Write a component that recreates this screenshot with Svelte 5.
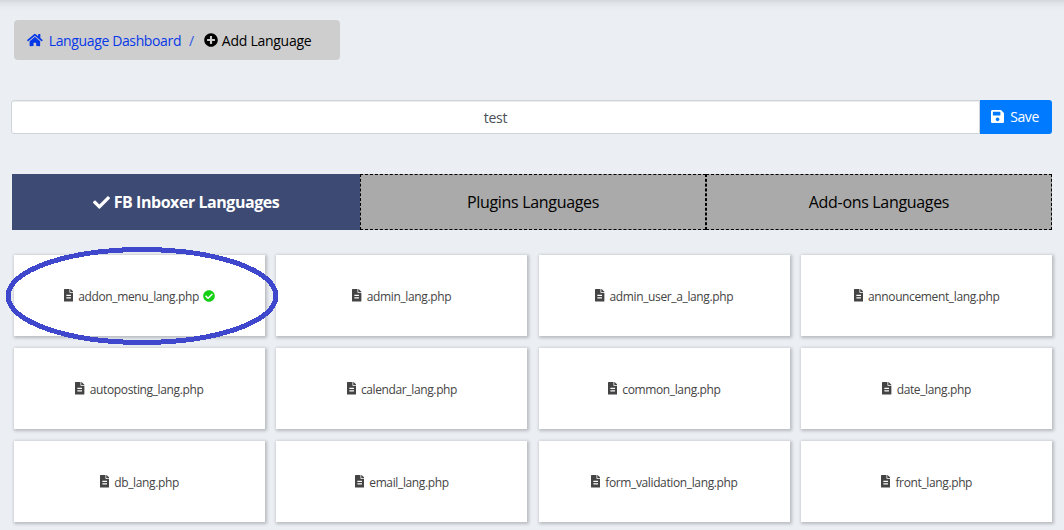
<script>
  const icons = {
    home: { w: 576, d: 'M280.37 148.26L96 300.11V464a16 16 0 0 0 16 16l112.06-.29a16 16 0 0 0 15.92-16V368a16 16 0 0 1 16-16h64a16 16 0 0 1 16 16v95.64a16 16 0 0 0 16 16.05L464 480a16 16 0 0 0 16-16V300L295.67 148.26a12.19 12.19 0 0 0-15.3 0zM571.6 251.47L488 182.56V44.05a12 12 0 0 0-12-12h-56a12 12 0 0 0-12 12v72.61L318.47 43a48 48 0 0 0-61 0L4.34 251.47a12 12 0 0 0-1.6 16.9l25.5 31A12 12 0 0 0 45.15 301l235.22-193.74a12.19 12.19 0 0 1 15.3 0L530.9 301a12 12 0 0 0 16.9-1.6l25.5-31a12 12 0 0 0-1.7-16.93z' },
    plus: { w: 512, d: 'M256 8C119 8 8 119 8 256s111 248 248 248 248-111 248-248S393 8 256 8zm144 276c0 6.6-5.4 12-12 12h-92v92c0 6.6-5.4 12-12 12h-56c-6.6 0-12-5.4-12-12v-92h-92c-6.6 0-12-5.4-12-12v-56c0-6.6 5.4-12 12-12h92v-92c0-6.6 5.4-12 12-12h56c6.6 0 12 5.4 12 12v92h92c6.6 0 12 5.4 12 12v56z' },
    save: { w: 448, d: 'M433.941 129.941l-83.882-83.882A48 48 0 0 0 316.118 32H48C21.49 32 0 53.49 0 80v352c0 26.51 21.49 48 48 48h352c26.51 0 48-21.49 48-48V163.882a48 48 0 0 0-14.059-33.941zM224 416c-35.346 0-64-28.654-64-64 0-35.346 28.654-64 64-64s64 28.654 64 64c0 35.346-28.654 64-64 64zm96-304.52V212c0 6.627-5.373 12-12 12H76c-6.627 0-12-5.373-12-12V108c0-6.627 5.373-12 12-12h228.52c3.183 0 6.235 1.264 8.485 3.515l3.48 3.48A11.996 11.996 0 0 1 320 111.48z' },
    check: { w: 512, d: 'M173.898 439.404l-166.4-166.4c-9.997-9.997-9.997-26.206 0-36.204l36.203-36.204c9.997-9.998 26.207-9.998 36.204 0L192 312.69 432.095 72.596c9.997-9.997 26.207-9.997 36.204 0l36.203 36.204c9.997 9.997 9.997 26.206 0 36.204l-294.4 294.401c-9.998 9.997-26.207 9.997-36.204-.001z' },
    done: { w: 512, d: 'M504 256c0 136.967-111.033 248-248 248S8 392.967 8 256 119.033 8 256 8s248 111.033 248 248zM227.314 387.314l184-184c6.248-6.248 6.248-16.379 0-22.627l-22.627-22.627c-6.248-6.249-16.379-6.249-22.628 0L216 308.118l-70.059-70.059c-6.248-6.248-16.379-6.248-22.628 0l-22.627 22.627c-6.248 6.248-6.248 16.379 0 22.627l104 104c6.249 6.249 16.379 6.249 22.628.001z' },
    file: { w: 384, d: 'M224 136V0H24C10.7 0 0 10.7 0 24v464c0 13.3 10.7 24 24 24h336c13.3 0 24-10.7 24-24V160H248c-13.2 0-24-10.8-24-24zm64 236c0 6.6-5.4 12-12 12H108c-6.6 0-12-5.4-12-12v-24c0-6.6 5.4-12 12-12h168c6.6 0 12 5.4 12 12v24zm0-96c0 6.6-5.4 12-12 12H108c-6.6 0-12-5.4-12-12v-24c0-6.6 5.4-12 12-12h168c6.6 0 12 5.4 12 12v24zM384 121.9v6.1H256V0h6.1c6.4 0 12.5 2.5 17 7l97.9 98c4.5 4.5 7 10.6 7 16.9z' },
  };

  const files = [
    'addon_menu', 'admin', 'admin_user_a', 'announcement',
    'autoposting', 'calendar', 'common', 'date',
    'db', 'email', 'form_validation', 'front',
  ];
  let selected = $state('addon_menu');
  let name = $state('test');
</script>

{#snippet icon(key)}
  <svg class="icon {key}" viewBox="0 0 {icons[key].w} 512" aria-hidden="true"><path d={icons[key].d} /></svg>
{/snippet}

<div class="page">
  <nav class="crumbs">
    <a href="#dashboard">{@render icon('home')}<span>Language Dashboard</span></a>
    <span class="slash">/</span>
    <span class="current">{@render icon('plus')}<span>Add Language</span></span>
  </nav>

  <div class="name-row">
    <input bind:value={name} />
    <button class="save-btn">{@render icon('save')}<span>Save</span></button>
  </div>

  <div class="tabs">
    <div class="tab active">{@render icon('check')}<span>FB Inboxer Languages</span></div>
    <div class="tab"><span>Plugins Languages</span></div>
    <div class="tab"><span>Add-ons Languages</span></div>
  </div>

  <div class="files">
    {#each files as f}
      <div class="card">
        {@render icon('file')}<span class="label">{f}_lang.php</span>
        {#if f === selected}
          {@render icon('done')}
          <svg class="ring" viewBox="0 0 274 100"><ellipse cx="137" cy="50" rx="134" ry="46.5" /></svg>
        {/if}
      </div>
    {/each}
  </div>
</div>

<style>
  :global(body) { margin: 0; background: #ebeef3; }
  .page {
    box-sizing: border-box;
    width: 1064px;
    height: 530px;
    overflow: hidden;
    padding: 20px 12px 0;
    background: linear-gradient(#d3d6da, #dfe2e6 3px, #e8ebf0 7px, #ebeef3 11px);
    font-family: 'Open Sans', 'Noto Sans', sans-serif;
    font-size: 14px;
    color: #000;
  }
  .icon { height: 1em; fill: currentColor; flex: none; display: block; }
  .crumbs {
    box-sizing: border-box;
    width: 326px;
    height: 40px;
    margin-left: 2px;
    padding: 0 13px;
    display: flex;
    align-items: center;
    background: #cecece;
    border-radius: 4px;
    letter-spacing: -0.37px;
    white-space: nowrap;
  }
  .crumbs a, .current { display: flex; align-items: center; text-decoration: none; }
  .crumbs a { color: #0638e8; gap: 6px; }
  .crumbs .current { letter-spacing: -0.27px; }
  .slash { color: #2b55e4; margin: 0 10px 0 8px; }
  .current { gap: 4px; }
  .name-row { display: flex; height: 34px; margin: 40px 0 0 -1px; }
  input {
    box-sizing: border-box;
    flex: 1;
    min-width: 0;
    border: 1px solid #ced4da;
    border-radius: 3px 0 0 3px;
    padding: 1px 0 0;
    text-align: center;
    font: inherit;
    letter-spacing: -0.3px;
    color: #495057;
    background: #fff;
    box-shadow: inset 0 1px 1px rgba(0, 0, 0, 0.075);
    outline: none;
  }
  .save-btn {
    width: 72px;
    padding: 0 2px 1px 0;
    border: 0;
    border-radius: 0 3px 3px 0;
    background: #007bff;
    color: #fff;
    font: inherit;
    letter-spacing: -0.4px;
    display: flex;
    align-items: center;
    justify-content: center;
    gap: 6px;
  }
  .save { height: 15px; }
  .tabs { display: grid; grid-template-columns: 348px 346px 346px; height: 56px; margin-top: 40px; }
  .tab {
    display: flex;
    align-items: center;
    justify-content: center;
    gap: 4px;
    font-size: 16px;
    letter-spacing: -0.32px;
    background: #aaa;
    border: 1px dashed #000;
  }
  .tab.active { background: #3d4a73; border-color: #3d4a73; color: #fff; font-weight: 700; letter-spacing: -0.45px; }
  .check { height: 17px; }
  .files {
    display: grid;
    grid-template-columns: repeat(4, 1fr);
    grid-auto-rows: 81px;
    gap: 12px 11.6px;
    margin: 25px 0 0 2px;
  }
  .card {
    position: relative;
    display: flex;
    align-items: center;
    justify-content: center;
    gap: 5px;
    background: #fff;
    box-shadow: 1px 1px 3px 1px rgba(0, 0, 0, 0.22);
    font-size: 12px;
    letter-spacing: -0.37px;
    color: #444;
  }
  .label { padding-top: 1px; }
  .file { height: 12.5px; }
  .done { color: #15cf15; margin-left: -1px; }
  .ring {
    position: absolute;
    left: -9px;
    top: -9px;
    width: 274px;
    height: 100px;
    z-index: 1;
    pointer-events: none;
  }
  .ring ellipse { fill: none; stroke: #3f48cc; stroke-width: 5; shape-rendering: crispEdges; }
</style>
